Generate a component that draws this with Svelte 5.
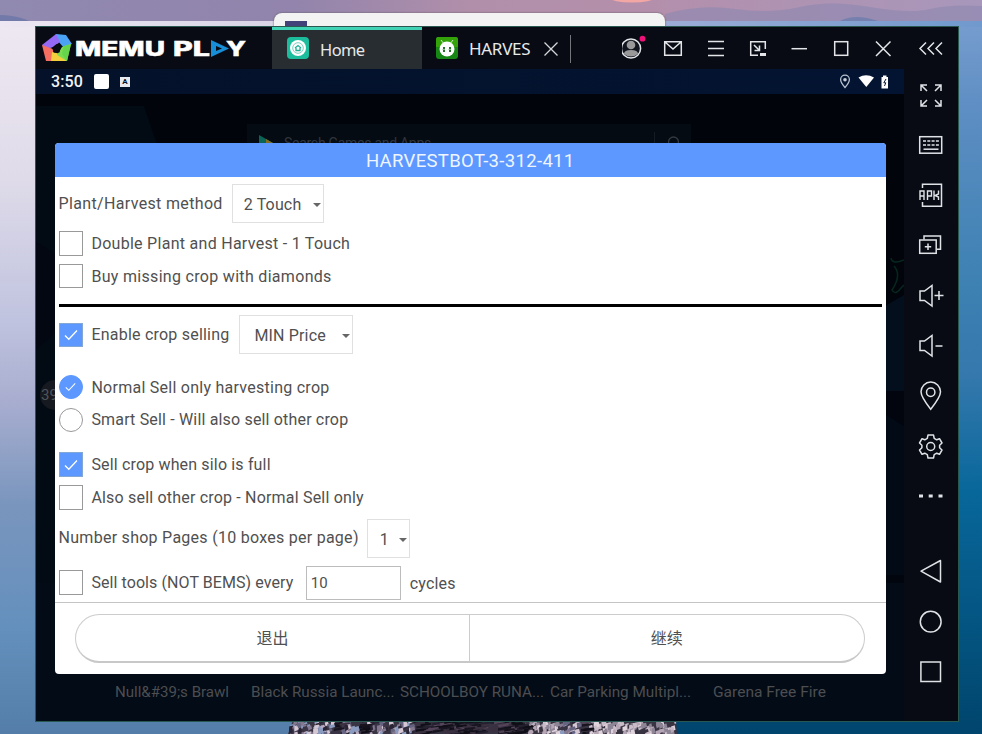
<script>
  const games = [
    { name: 'Null&#39;s Brawl', x: 79, w: 114 },
    { name: 'Black Russia Launc...', x: 214.5, w: 143.5 },
    { name: 'SCHOOLBOY RUNA...', x: 363.5, w: 144 },
    { name: 'Car Parking Multipl...', x: 514, w: 141 },
    { name: 'Garena Free Fire', x: 677, w: 113 }
  ];
  const palette = ['#b9a9be', '#65637f', '#8b9bc0', '#292334', '#d5c7d3', '#83788f', '#3b3548'];
  const darks = ['#17141f', '#242030', '#3a3040', '#100f18', '#55455a'];
  // Deterministic noise keeps the rock texture the same on every load.
  const noise = (n) => { const v = Math.sin(n * 127.1) * 43758.5453; return v - Math.floor(v); };
  const rocks = Array.from({ length: 520 }, (_, i) => {
    const x = 288 + noise(i + 1) * 386;
    const dark = (x > 412 && x < 525) || (x > 333 && x < 341) || (x > 358 && x < 366) || (x > 578 && x < 588);
    const set = dark ? darks : x > 585 || (x > 525 && x < 555) ? ['#c9bcc8', '#8d8496', '#e0d3db', '#39323f', '#b5a5b5'] : palette;
    return {
      x, y: 720 + noise(i + 900) * 13,
      w: dark ? 10 : 2 + noise(i + 40) * 3,
      h: dark ? 1.5 : 2 + noise(i + 300) * 4,
      c: set[Math.floor(noise(i + 77) * set.length)]
    };
  });
</script>

{#snippet check()}
  <svg width="14" height="12" viewBox="0 0 14 12"><path d="M1 6.5 4.8 10.3 13 1.5" fill="none" stroke="#fff" stroke-width="1.3" /></svg>
{/snippet}

{#snippet option(label, on, round, spacing)}
  <div class="row opt">
    <span class="box" class:on class:round>{#if on}{@render check()}{/if}</span>
    <span class="t" style="letter-spacing:{spacing}px">{label}</span>
  </div>
{/snippet}

<div class="desktop">
  <svg class="wall" width="982" height="734" viewBox="0 0 982 734">
    <defs>
      <linearGradient id="sky" x1="0" x2="1" y1="0" y2="0">
        <stop offset="0" stop-color="#9089b0" /><stop offset=".3" stop-color="#9284ac" />
        <stop offset=".48" stop-color="#b18faa" /><stop offset=".65" stop-color="#b48fab" /><stop offset="1" stop-color="#a897bb" />
      </linearGradient>
      <linearGradient id="left" x1="0" x2="0" y1="0" y2="1">
        <stop offset="0" stop-color="#eee8f1" /><stop offset=".22" stop-color="#dfdbe9" />
        <stop offset=".42" stop-color="#c0c3df" /><stop offset=".53" stop-color="#a9aed0" />
        <stop offset=".68" stop-color="#7995bd" /><stop offset=".85" stop-color="#6490bd" /><stop offset="1" stop-color="#547ea9" />
      </linearGradient>
      <linearGradient id="right" x1="0" x2="0" y1="0" y2="1">
        <stop offset="0" stop-color="#779dce" /><stop offset=".12" stop-color="#5e8ec4" />
        <stop offset=".35" stop-color="#3f82b3" /><stop offset=".5" stop-color="#3478ad" />
        <stop offset=".66" stop-color="#08679a" /><stop offset="1" stop-color="#00456d" />
      </linearGradient>
      <linearGradient id="band" x1="0" x2="1" y1="0" y2="0">
        <stop offset="0" stop-color="#ece7f2" /><stop offset=".28" stop-color="#d9d4e6" />
        <stop offset=".67" stop-color="#9dacd6" /><stop offset="1" stop-color="#7099cd" />
      </linearGradient>
    </defs>
    <rect width="982" height="22" fill="url(#sky)" />
    <ellipse cx="632" cy="-2" rx="22" ry="4.5" fill="#f3a7a5" />
    <path d="M665 14Q700 4 735 9T800 7T870 7T930 9T982 6V22H665Z" fill="#9189b0" opacity=".7" />
    <path d="M0 15Q22 16 30 22H0Z" fill="#727aa9" />
    <path d="M840 21Q855 13 878 21Z" fill="#7580ae" />
    <rect y="21" width="400" height="713" fill="url(#left)" />
    <rect x="670" y="21" width="312" height="713" fill="url(#right)" />
    <rect y="21" width="982" height="6" fill="url(#band)" />
    <path d="M293 720H676L677 734H288Z" fill="#393443" />
    {#each rocks as r}
      <path d="M{r.x} {r.y}l{r.w} -1l1 {r.h}l-{r.w + 1} 2z" fill={r.c} />
    {/each}
  </svg>

  <div class="behind"><span class="blk"></span></div>

  <div class="window">
    <header class="title">
      <svg class="brand" width="236" height="42" viewBox="0 0 236 42">
        <path d="M20 7 30 8 36 17 28 21 22 14 17 16Z" fill="#4ba2f4" />
        <path d="M20 7 6 18 9 23 17 20 24 15Z" fill="#9568f5" />
        <path d="M6 18 10 34H18L17 22Z" fill="#f46e62" />
        <path d="M10 34H31L29 28 16 25 15 34Z" fill="#f4cf3d" />
        <path d="M35 17 31 34 21 28 26 20Z" fill="#7bdc51" />
        <path d="M35 17 31 34 26 27 28 19Z" fill="#65d64b" />
        <path d="M20.500 17 25 19.500 23.500 25.500H18L16 21Z" fill="#080b14" />
        <text x="39" y="28.7" textLength="90" lengthAdjust="spacingAndGlyphs">MEMU</text>
        <text x="137" y="28.7" textLength="37" lengthAdjust="spacingAndGlyphs">PL</text>
        <path d="M175 13 193 21.5 175 30Z" fill="#168ed8" /><path d="M180 19 186 21.5 180 24Z" fill="#080b14" />
        <text x="190" y="28.7" textLength="20" lengthAdjust="spacingAndGlyphs">Y</text>
      </svg>
      <div class="tab active">
        <svg width="22" height="22" viewBox="0 0 22 22"><rect width="22" height="22" rx="4" fill="#1bbd9c" /><circle cx="11" cy="11" r="8" fill="#fff" /><circle cx="11" cy="11" r="5.3" fill="none" stroke="#79cfbf" /><path d="M8 11 11 8.5 14 11M9 11V13.5H13V11" fill="none" stroke="#20af94" stroke-width="1.3" /></svg>
        <span>Home</span>
      </div>
      <div class="tab second">
        <svg width="22" height="22" viewBox="0 0 22 22"><rect width="22" height="22" rx="3" fill="#168714" /><path d="M2 0H20Q22 0 22 3V10H0V3Q0 0 2 0" fill="#34a30a" /><path d="M5 3 8 7M17 3 14 7" stroke="#c8ecc2" /><ellipse cx="11" cy="12" rx="7.5" ry="7.5" fill="#fff" /><path d="M8 10V15M14 10V15" stroke="#287329" stroke-width="2" /><path d="M6.5 12.5H9M12.5 12.5H15" stroke="#8fc58f" /></svg>
        <span>HARVES</span>
        <svg class="close" width="14" height="14" viewBox="0 0 14 14"><path d="M.5.5 13.5 13.5M13.5.5.5 13.5" stroke="#d5d7da" stroke-width="1.3" /></svg>
        <i></i>
      </div>
      <svg class="tools" width="335" height="42" viewBox="622 27 335 42" fill="none" stroke="#e3e5e8" stroke-width="1.5">
        <circle cx="631" cy="48.5" r="9.6" fill="#11151d" /><circle cx="631" cy="45" r="4.3" fill="#999" stroke="none" /><path d="M624 54Q624 50 631 50T638 54Q631 59 624 54Z" fill="#999" stroke="none" />
        <circle cx="642.5" cy="38.7" r="2.9" fill="#ee1177" stroke="none" />
        <path d="M664.7 41.7H681.3V55.3H664.7ZM665 42 673 49 681 42" />
        <path d="M708 41.5H724M708 48.5H724M708 55.5H724" />
        <path d="M765.3 49V41.7H750.7V55.3H758M754 45 759 50M759.5 45.5V50.5H754.5" /><path d="M760 54.5H766" stroke-width="3" />
        <path d="M791.5 48.7H807" />
        <rect x="834.7" y="41.7" width="13" height="13.6" />
        <path d="M876 41.5 890.5 56M890.5 41.5 876 56" />
        <path d="M926 42.5 920 48.5 926 54.5M934 42.5 928 48.5 934 54.5M942 42.5 936 48.5 942 54.5" />
      </svg>
    </header>

    <div class="main">
      <div class="screen">
        <div class="status">
          <b>3:50</b><span class="sq"></span><span class="a">A</span>
          <svg width="52" height="18" viewBox="838 73 52 18">
            <path d="M845 87.500C841.500 83.500 840.600 82 840.600 79.500A4.400 4.400 0 0 1 849.400 79.500C849.400 82 848.500 83.500 845 87.500Z" fill="none" stroke="#b9c3d0" stroke-width="1.3" /><circle cx="845" cy="79.700" r="1.8" fill="#c8ced8" />
            <path d="M858.5 77.5Q866 73 874 77.5L866.3 87Z" fill="#fff" />
            <path d="M881.5 77H883V75.5H886.500V77H888V88.500H881.5Z" fill="#fff" /><path d="M886 79 883.800 82.8H885.800L884.500 86" fill="none" stroke="#071631" stroke-width="1" />
          </svg>
        </div>
        <div class="launcher">
          <svg class="shade" width="868" height="627" viewBox="36 94 868 627">
            <path d="M36 106H144L190 240V583H36Z" fill="#020a14" /><path d="M36 242 55 253V333L36 350Z" fill="#020711" />
            <path d="M885 306 904 295V391L885 391Z" fill="#030f1d" /><path d="M885 391H904V426L885 414Z" fill="#02050d" />
            <path d="M885 414 904 426V575H885Z" fill="#020a16" />
            <rect x="36" y="583" width="868" height="138" fill="#030b16" />
            <rect x="885" y="575" width="19" height="8" fill="#01050d" />
            <path d="M891 258Q892 265 904 260M894 266Q902 275 892 290Q895 296 901 288L904 285" fill="none" stroke="#06271f" stroke-width="1.5" />
            <circle cx="55" cy="395" r="15" fill="#16191f" />
            <path d="M247 124H691V160H247Z" fill="#050b13" />
            <path d="M259 135 273 143 259 151Z" fill="#0b6557" /><path d="M266 139 273 143H266Z" fill="#816d20" />
            <path d="M654.500 132V154" stroke="#151b22" /><circle cx="673.500" cy="142" r="5" fill="none" stroke="#343940" stroke-width="1.3" />
          </svg>
          <span class="search">Search Games and Apps</span>
          <span class="badge">39</span>
          {#each games as g}
            <svg class="game" style="left:{g.x}px" width={g.w + 2} height="22"><text x="0" y="15.500" textLength={g.w} lengthAdjust="spacingAndGlyphs">{g.name}</text></svg>
          {/each}
        </div>

        <section class="dialog">
          <h1>HARVESTBOT-3-312-411</h1>
          <div class="body">
            <div class="row sel"><span style="letter-spacing:.34px">Plant/Harvest method</span><span class="select" style="width:92px;margin-left:9px;padding-left:11px">2 Touch<i></i></span></div>
            <div class="g4"></div>
            {@render option('Double Plant and Harvest - 1 Touch', false, false, 0.28)}
            {@render option('Buy missing crop with diamonds', false, false, 0.31)}
            <hr />
            <div class="row sel">
              <span class="box on">{@render check()}</span><span class="t" style="letter-spacing:.22px">Enable crop selling</span>
              <span class="select" style="width:114px;margin-left:9px;padding-left:15px">MIN Price<i></i></span>
            </div>
            <div class="g16"></div>
            {@render option('Normal Sell only harvesting crop', true, true, 0.26)}
            {@render option('Smart Sell - Will also sell other crop', false, true, 0.17)}
            <div class="g11"></div>
            {@render option('Sell crop when silo is full', true, false, 0.16)}
            {@render option('Also sell other crop - Normal Sell only', false, false, 0.19)}
            <div class="g5"></div>
            <div class="row sel"><span style="letter-spacing:.27px">Number shop Pages (10 boxes per page)</span><span class="select" style="width:43px;margin-left:8px;padding-left:12px">1<i></i></span></div>
            <div class="row last">
              <span class="box"></span><span class="t" style="letter-spacing:.08px">Sell tools (NOT BEMS) every</span>
              <span class="input">10</span><span class="cyc">cycles</span>
            </div>
          </div>
          <footer><div class="pill"><span>退出</span><span>继续</span></div></footer>
        </section>
      </div>

      <aside>
        <svg width="53" height="652" viewBox="904 69 53 652" fill="none" stroke="#e0e3e6" stroke-width="1.5">
          <path d="M921 91V85H927M921.500 85.500 927 91M935 85H941V91M940.500 85.500 935 91M921 100V106H927M921.500 105.500 927 100M941 100V106H935M940.500 105.500 935 100" />
          <rect x="919.700" y="136.700" width="22" height="16.500" /><path d="M923 141H939M923 145H939" stroke-dasharray="3 1.3" /><path d="M923.500 149.200H938.500" />
          <path d="M922.500 188V184.200H941.500V206.200H922.500V202" />
          <path d="M920 200V191H924V200M920 196H924M927.500 200V191H931.500V196H927.500M934 190.500V200M938.500 190.500V194L935 195.500 938.500 197V200" stroke-width="1.4" />
          <path d="M924 239.500V236H940.500V249.300H937" /><rect x="919.700" y="240" width="16.500" height="13.300" /><path d="M928 243.500V250M924.800 246.700H931.200" />
          <path d="M920 291H924.500L932 285.500V306L924.500 300.500H920ZM934.500 295.500H943.500M939 291V300" />
          <path d="M920 341H924.500L932 335.500V356L924.500 350.500H920ZM935.500 346H942.500" />
          <path d="M930.700 409.200C925 402 921 396.500 921 391.800A9.700 9.700 0 0 1 940.500 391.800C940.500 396.500 936.500 402 930.700 409.200Z" /><circle cx="930.700" cy="392.200" r="4.200" />
          <path d="M928 435H933.500L934.200 438.400L936.700 439.800L939.500 438.700L942 443L939.600 445.300V447.700L942 450L939.500 454.300L936.700 453.200L934.200 454.600L933.500 458H928L927.300 454.600L924.800 453.200L922 454.300L919.500 450L921.900 447.700V445.300L919.500 443L922 438.700L924.800 439.800L927.300 438.400Z" stroke-linejoin="round" /><circle cx="930.700" cy="446.500" r="4" />
          <path d="M919 496H923M928.700 496H932.700M938.500 496H942.500" stroke-width="2.800" />
          <path d="M940.500 560.500V582L921 571.200Z" stroke-linejoin="round" />
          <circle cx="930.700" cy="621.700" r="10.400" />
          <rect x="920.900" y="662" width="19.600" height="19.500" />
        </svg>
      </aside>
    </div>
  </div>
</div>

<style>
  :global(body) { margin: 0; overflow: hidden; }
  .desktop { position: relative; width: 982px; height: 734px; overflow: hidden; background: #547ea9; font-family: Roboto, "Noto Sans CJK SC", sans-serif; }
  svg { display: block; flex: none; }
  .wall { position: absolute; inset: 0; }
  .behind { position: absolute; left: 274px; top: 13px; width: 391px; height: 30px; border-radius: 8px; background: #f3f3f3; box-shadow: 0 0 2px #555; }
  .blk { display: block; width: 22px; height: 10px; margin: 8px 0 0 11px; background: #43417a; }
  .window { position: absolute; left: 35px; top: 26px; width: 922px; height: 694px; border: 1px solid #28584f; background: #080b14; display: flex; flex-direction: column; }
  .title { height: 42px; flex: none; display: flex; }
  .brand text { font: 800 20.3px Inter, sans-serif; fill: #fff; stroke: #fff; stroke-width: .5; }
  .tab { box-sizing: border-box; height: 42px; display: flex; align-items: center; color: #e7e9eb; font: 17px/24px "Noto Sans", sans-serif; padding-top: 1px; }
  .tab.active { width: 150px; padding-left: 15px; gap: 11px; background: #282d31; border-top: 3px solid #3fd2b5; padding-top: 0; }
  .active svg { margin-top: -3px; }
  .active span { margin-top: 0; font-size: 16.5px; letter-spacing: -.6px; }
  .second { width: 200px; padding-left: 14px; }
  .second svg:first-child { margin-top: -1px; }
  .second span { margin: 1px 0 0 11px; width: 64px; font-size: 17px; letter-spacing: -.3px; }
  .close { margin-left: 11px; }
  .second i { width: 1px; height: 28px; background: #73767b; margin-left: 12px; }
  .main { display: flex; flex: 1; }
  .screen { position: relative; width: 868px; height: 652px; }
  aside { width: 53px; background: #080b14; }
  .status { height: 25px; display: flex; align-items: center; background: linear-gradient(90deg, #041129, #031432); color: #f1f3f5; padding-left: 15px; }
  .status b { font: 500 16px/25px Roboto, sans-serif; width: 43px; letter-spacing: .1px; }
  .sq { width: 15px; height: 15px; border-radius: 2px; background: #fff; }
  .a { width: 10px; height: 10px; margin-left: 11px; background: #e6e9ed; color: #06122a; font: 700 8px/10px Roboto, sans-serif; text-align: center; }
  .status svg { margin-left: auto; margin-right: 14px; }
  .launcher { position: relative; height: 627px; background: #01040b; overflow: hidden; }
  .shade { position: absolute; inset: 0; }
  .search { position: absolute; left: 248px; top: 39px; font-size: 14px; line-height: 20px; color: #30353b; white-space: nowrap; letter-spacing: -.28px; }
  .badge { position: absolute; left: 5px; top: 291px; font-size: 15px; line-height: 20px; color: #50545a; }
  .game { position: absolute; top: 587px; }
  .game text { font: 15.500px Roboto, sans-serif; fill: #4c4e51; }
  .dialog { position: absolute; left: 19px; top: 74px; width: 830.5px; height: 530.5px; border-radius: 4px; background: #fff; overflow: hidden; display: flex; flex-direction: column; color: #505050; font-size: 16px; }
  h1 { margin: 0; height: 34px; flex: none; background: #5c98ff; color: #eef5ff; font: 400 18.5px/36px Roboto, sans-serif; letter-spacing: .33px; text-align: center; }
  .body { height: 426px; box-sizing: border-box; padding: 7px 4px 0 3.6px; border-bottom: 1px solid #c4c4c4; flex: none; }
  .row { display: flex; align-items: center; white-space: nowrap; line-height: 20px; }
  .sel { height: 39px; }
  .opt { height: 32.7px; }
  .box { box-sizing: border-box; width: 24.500px; height: 24.500px; border: 1.3px solid #999; display: flex; align-items: center; justify-content: center; flex: none; }
  .box.on { background: #5c98ff; border-color: #83a8d5; }
  .round { border-radius: 50%; }
  .round.on { border-color: #5c98ff; }
  .round svg { width: 11px; height: 10px; }
  .t { margin-left: 8.3px; }
  .opt .t { margin-top: 1px; }
  .select { position: relative; box-sizing: border-box; height: 39px; border: 1px solid #e0e0e0; line-height: 39px; flex: none; letter-spacing: .15px; }
  .select i { position: absolute; right: 1.5px; top: 18px; border: 4px solid transparent; border-top: 4.5px solid #666; border-bottom: 0; }
  .g4 { height: 4px; } .g5 { height: 5px; } .g16 { height: 16.500px; } .g11 { height: 12px; }
  hr { margin: 11.500px 0 8.500px; height: 3px; border: 0; background: #000; }
  .last { height: 34px; margin-top: 8px; }
  .input { box-sizing: border-box; width: 95px; height: 34px; border: 1.300px solid #bcbcbc; margin-left: 12.500px; padding-left: 4px; font-size: 15px; line-height: 32px; }
  .cyc { margin-left: 9px; margin-top: 3px; letter-spacing: .15px; }
  footer { padding: 10.500px 21px 0 20px; }
  .pill { box-sizing: border-box; height: 49px; border: 1.500px solid #ccc; border-bottom: 2px solid #c8c8c8; border-radius: 25px; display: flex; }
  .pill span { flex: 1; text-align: center; font: 16px/45px "Noto Sans CJK SC", sans-serif; }
  .pill span + span { border-left: 1px solid #ccc; }
</style>
